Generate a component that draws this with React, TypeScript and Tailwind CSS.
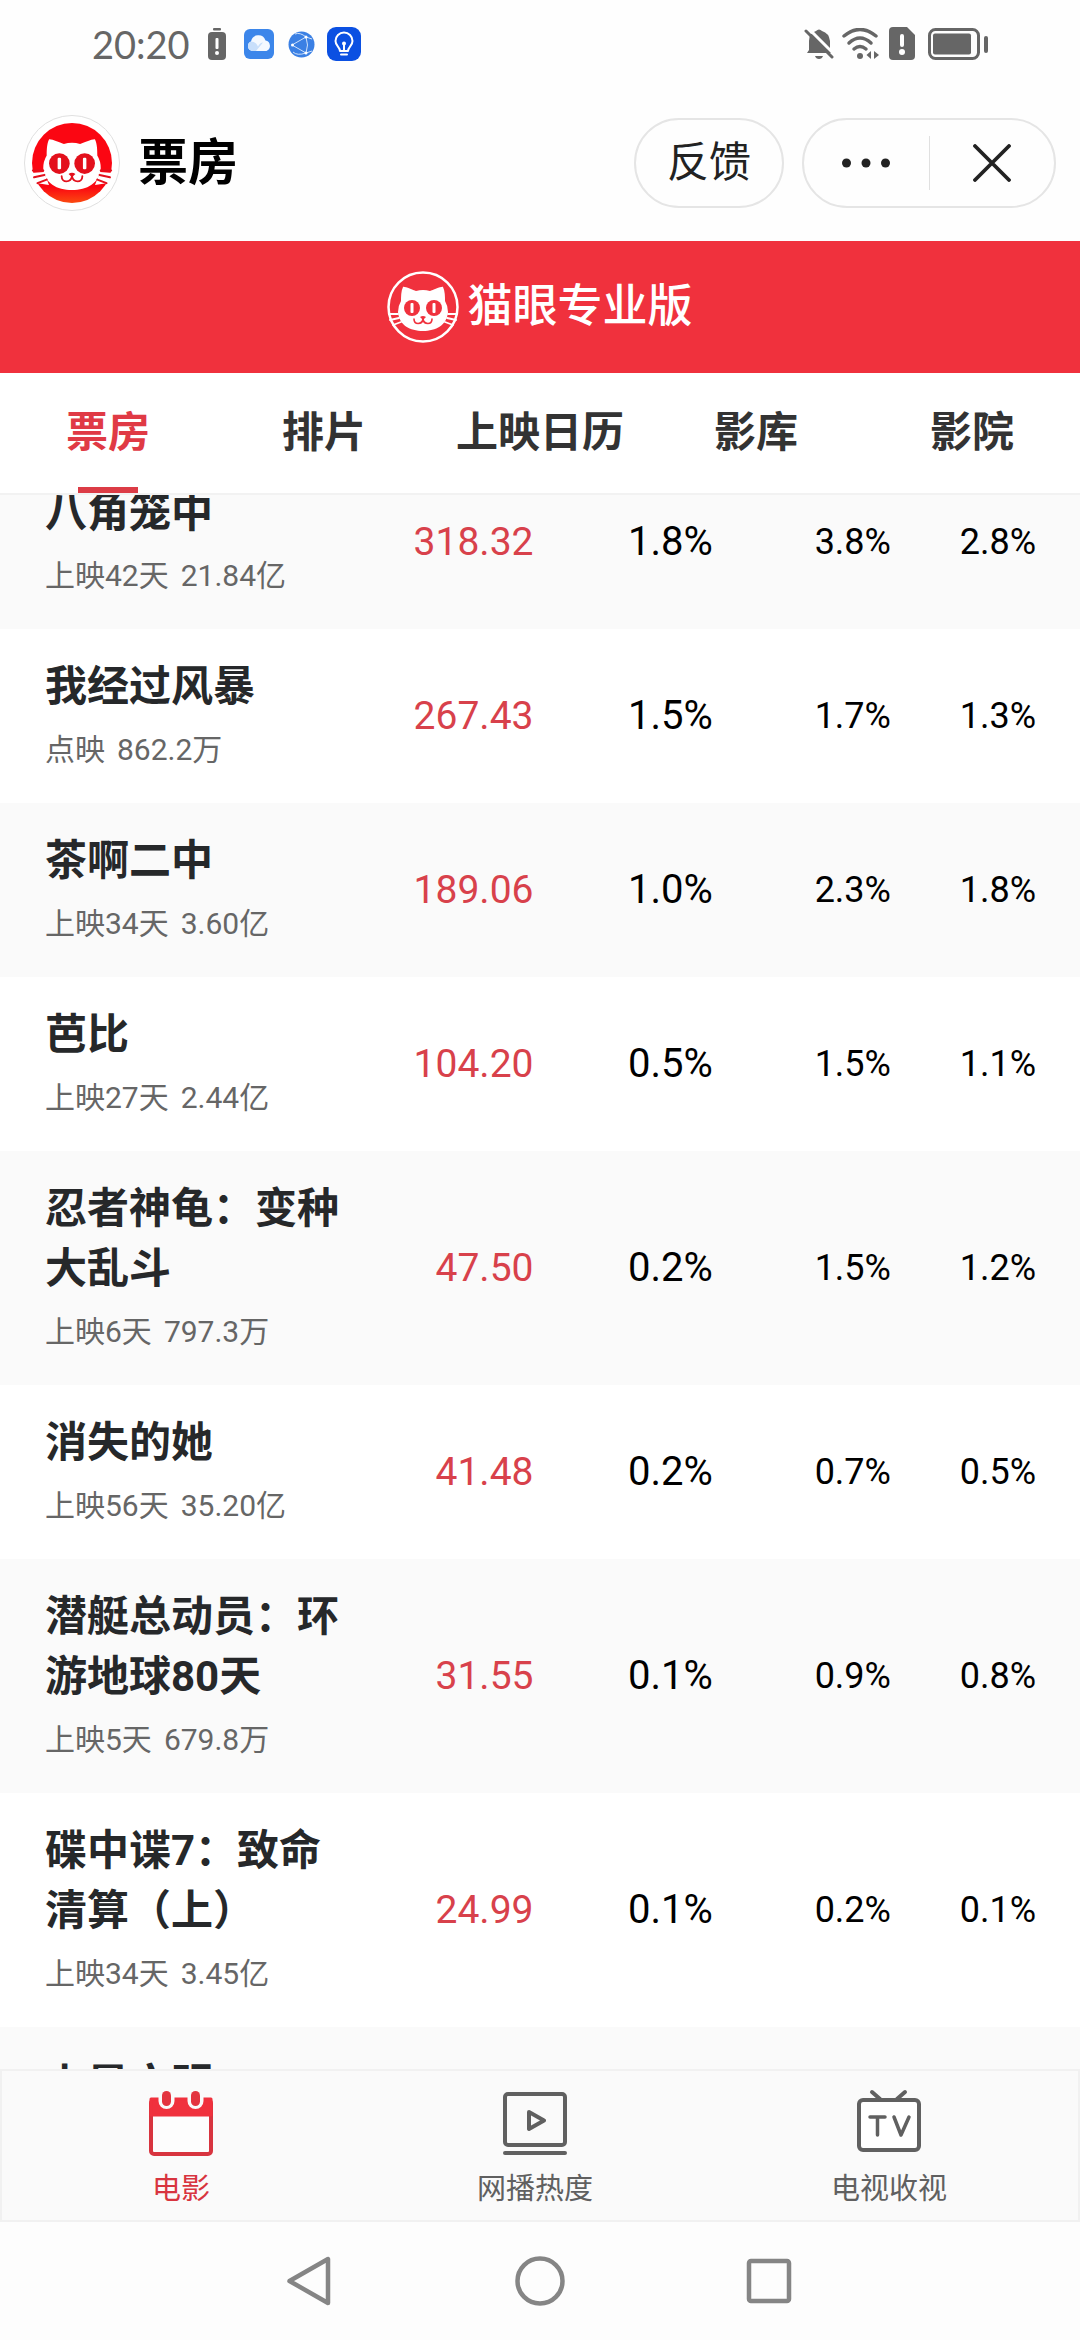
import type { ReactNode } from 'react';

type Film = { title: string; run: string; total: string; gross: string; share: string; shows: string; seats: string };

const films: Film[] = [
  { title: '八角笼中', run: '上映42天', total: '21.84亿', gross: '318.32', share: '1.8%', shows: '3.8%', seats: '2.8%' },
  { title: '我经过风暴', run: '点映', total: '862.2万', gross: '267.43', share: '1.5%', shows: '1.7%', seats: '1.3%' },
  { title: '茶啊二中', run: '上映34天', total: '3.60亿', gross: '189.06', share: '1.0%', shows: '2.3%', seats: '1.8%' },
  { title: '芭比', run: '上映27天', total: '2.44亿', gross: '104.20', share: '0.5%', shows: '1.5%', seats: '1.1%' },
  { title: '忍者神龟：变种大乱斗', run: '上映6天', total: '797.3万', gross: '47.50', share: '0.2%', shows: '1.5%', seats: '1.2%' },
  { title: '消失的她', run: '上映56天', total: '35.20亿', gross: '41.48', share: '0.2%', shows: '0.7%', seats: '0.5%' },
  { title: '潜艇总动员：环游地球80天', run: '上映5天', total: '679.8万', gross: '31.55', share: '0.1%', shows: '0.9%', seats: '0.8%' },
  { title: '碟中谍7：致命清算（上）', run: '上映34天', total: '3.45亿', gross: '24.99', share: '0.1%', shows: '0.2%', seats: '0.1%' },
  { title: '上是文明', run: '', total: '', gross: '', share: '', shows: '', seats: '' },
];

const tabs = ['票房', '排片', '上映日历', '影库', '影院'];

/* Cat face on a 72-unit square; `eye` is the colour behind the face. */
function CatFace({ eye, eyeRadius, whisker }: { eye: string; eyeRadius: number; whisker: string }) {
  return (
    <g>
      <path
        fill="#fff"
        d="M16 16 C17 15 26 19 29 20 Q36 18 43 20 C46 19 55 15 56 16 C58 20 58 26 58 30 Q61 35 61 41 C60 54 49 60 36 60 C23 60 12 54 11 41 Q11 35 14 30 C14 26 14 20 16 16 Z"
      />
      <g fill={eye}>
        <circle cx="25" cy="37" r={eyeRadius} />
        <circle cx="47" cy="37" r={eyeRadius} />
        <path d="M33 46 Q36 44 39 46 L36 49 Z" />
      </g>
      <g fill="none" strokeLinecap="round">
        <path stroke={eye} strokeWidth="1.600" d="M36 48 C35 54 27 54 27 48 M36 48 C37 54 45 54 45 48" />
        <path stroke={whisker} strokeWidth="1.800" d="M2 43 L11 43 M3 49 L12 47 M6 54 L14 51 M70 43 L61 43 M69 49 L60 47 M66 54 L58 51" />
      </g>
      <g fill="#fff">
        <rect x="23.500" y="32" width="3" height="10" rx="1" />
        <rect x="45.500" y="32" width="3" height="10" rx="1" />
      </g>
    </g>
  );
}

function StatusBar() {
  return (
    <div className="flex h-[88px] shrink-0 items-center justify-between pr-[92px] pl-[92px] text-[#666]">
      <div className="flex items-center">
        <span className="w-[98px] text-[38px] leading-[48px] whitespace-nowrap" style={{ fontFamily: 'Lato, sans-serif' }}>
          20:20
        </span>
        <svg className="ml-[17px] h-8 w-5" viewBox="0 0 20 32" fill="currentColor">
          <rect x="6" y="0" width="8" height="2.5" rx="1" />
          <rect x="1" y="4" width="18" height="28" rx="4" />
          <rect x="8.5" y="10" width="3" height="11" rx="1" fill="#fff" />
          <circle cx="10" cy="25" r="2" fill="#fff" />
        </svg>
        <svg className="ml-[17px] size-[30px]" viewBox="0 0 30 30">
          <rect width="30" height="30" rx="6" fill="#3c86ea" />
          <path d="M8 22 a5 5 0 0 1 -1 -9.500 a7.500 7.500 0 0 1 14.500 -1 a5.500 5.500 0 0 1 1 10.500 Z" fill="#f4f9ff" />
          <path d="M8 22 a5 5 0 0 1 -1 -9.500 q5 0 7 5 q2 -4 5 -4 l-7 8.500 Z" fill="#c8dffb" />
        </svg>
        <svg className="ml-[14px] size-[27px]" viewBox="0 0 27 27">
          <circle cx="13.500" cy="13.500" r="13" fill="#3b80e4" />
          <g fill="none" stroke="#cfe1fa" strokeWidth="1">
            <path d="M4 14 L18 6 M4 14 L18 22 M18 6 Q21 14 18 22 M18 6 Q12 1 7 3 M18 6 L24 8 M18 22 Q9 25 5 21 M18 22 L24 20" />
          </g>
          <g fill="#fff">
            <circle cx="4.500" cy="14" r="1.500" />
            <circle cx="18" cy="6" r="1.500" />
            <circle cx="18" cy="22" r="1.500" />
          </g>
        </svg>
        <svg className="ml-3 size-[34px]" viewBox="0 0 34 34">
          <rect width="34" height="34" rx="9" fill="#0b50e2" />
          <g fill="none" stroke="#fff" strokeWidth="2" strokeLinecap="round" strokeLinejoin="round">
            <path d="M13 24 C13 20 8.500 19 8.500 14 A8.500 8.500 0 0 1 25.500 14 C25.500 19 21 20 21 24 Z" />
            <path d="M14 27.500 H20 M17 24 V17" />
          </g>
          <circle cx="17" cy="16.500" r="2" fill="#fff" />
        </svg>
      </div>
      <div className="flex items-center">
        <svg className="h-8 w-[30px]" viewBox="0 0 30 32" fill="currentColor">
          <path d="M3 25 L5 22 V13 Q5 5 12 3 Q15 0 18 3 Q25 5 26 13 V22 L28 25 Z" />
          <path d="M11 28 H19 Q18 31 15 31 Q12 31 11 28 Z" />
          <path d="M1 -3 L33 29" stroke="#fff" strokeWidth="3" />
          <path d="M2 3 L28 29" stroke="currentColor" strokeWidth="3" strokeLinecap="round" />
        </svg>
        <svg className="ml-2 h-8 w-[38px]" viewBox="0 0 38 32">
          <g fill="none" stroke="currentColor" strokeWidth="3.500" strokeLinecap="round">
            <path d="M2 8 Q18 -5 34 8" />
            <path d="M7 15 Q18 5 29 15" />
            <path d="M12 21 Q18 16 24 21" />
          </g>
          <circle cx="18" cy="28" r="3" fill="currentColor" />
          <path d="M29 23 V31 L24.500 27 Z M32 23 V31 L37 27 Z" fill="currentColor" />
        </svg>
        <svg className="ml-2 h-[34px] w-7" viewBox="0 0 28 34" fill="currentColor">
          <path d="M5 0 H19 L27 8 V29 Q27 33 23 33 H5 Q1 33 1 29 V4 Q1 0 5 0 Z" />
          <rect x="12" y="7" width="4" height="13" rx="2" fill="#fff" />
          <circle cx="14" cy="25" r="3" fill="#fff" />
        </svg>
        <svg className="ml-3 h-8 w-[60px]" viewBox="0 0 60 32">
          <rect x="1.500" y="1.500" width="49" height="29" rx="6" fill="none" stroke="currentColor" strokeWidth="3" />
          <rect x="5" y="5.500" width="38" height="21" rx="2" fill="currentColor" />
          <rect x="56" y="8" width="4" height="17" rx="2" fill="currentColor" />
        </svg>
      </div>
    </div>
  );
}

function AppHeader() {
  return (
    <header className="flex h-[153px] shrink-0 items-center pr-6 pb-1 pl-6">
      <svg className="size-24" viewBox="0 0 96 96">
        <defs>
          <linearGradient id="badge" x1="0" y1="0" x2="0" y2="1">
            <stop offset="0.800" stopColor="#fb0612" />
            <stop offset="1" stopColor="#fb4a10" />
          </linearGradient>
        </defs>
        <circle cx="48" cy="48" r="47.500" fill="#fff" stroke="#e0e0e0" />
        <circle cx="48" cy="48" r="40" fill="url(#badge)" />
        <path d="M7 58 L20 57 L25 70 L12 68 Z M89 58 L76 57 L71 70 L84 68 Z" fill="#fff" />
        <g transform="translate(6.600 6) scale(1.150)">
          <CatFace eye="#e3101c" eyeRadius={9} whisker="#e3101c" />
        </g>
      </svg>
      <h1 className="ml-[18px] text-[50px] leading-[60px] font-bold text-black">票房</h1>
      <button type="button" className="ml-auto h-[90px] w-[150px] rounded-full border-2 border-[#e5e5e5] text-[42px] text-[#222]">
        反馈
      </button>
      <div className="ml-[18px] flex h-[90px] w-[254px] items-center rounded-full border-2 border-[#e5e5e5] text-[#222]">
        <button type="button" aria-label="更多" className="flex flex-1 justify-center">
          <svg className="h-3 w-12" viewBox="0 0 48 12" fill="currentColor">
            <circle cx="4.500" cy="6" r="4.500" />
            <circle cx="24" cy="6" r="4.500" />
            <circle cx="43.500" cy="6" r="4.500" />
          </svg>
        </button>
        <span className="h-[54px] w-px bg-[#e0e0e0]" />
        <button type="button" aria-label="关闭" className="flex flex-1 justify-center">
          <svg className="size-[38px]" viewBox="0 0 38 38" fill="none" stroke="currentColor" strokeWidth="3.800" strokeLinecap="round">
            <path d="M2 2 L36 36 M36 2 L2 36" />
          </svg>
        </button>
      </div>
    </header>
  );
}

function Banner() {
  return (
    <div className="flex h-[132px] shrink-0 items-center justify-center bg-[#f0313d]">
      <svg className="size-[72px]" viewBox="0 0 72 72">
        <circle cx="36" cy="36" r="34.500" fill="none" stroke="#fff" strokeWidth="2.500" />
        <CatFace eye="#f0313d" eyeRadius={8} whisker="#fff" />
      </svg>
      <span className="ml-2 text-[45px] leading-[60px] font-medium text-white">猫眼专业版</span>
    </div>
  );
}

function Tabs() {
  return (
    <nav className="grid h-[122px] shrink-0 grid-cols-5 border-b-2 border-[#f2f2f2] bg-white">
      {tabs.map((t, i) => (
        <button
          key={t}
          type="button"
          className={
            'relative flex items-center justify-center text-[42px] leading-[60px] font-bold whitespace-nowrap ' +
            (i === 0 ? 'text-[#e03a45]' : 'text-[#333]')
          }
        >
          {t}
          {i === 0 && <span className="absolute bottom-0 left-1/2 h-1.5 w-[60px] -translate-x-1/2 bg-[#dc3c46]" />}
        </button>
      ))}
    </nav>
  );
}

function FilmTable() {
  return (
    <main className="min-h-0 flex-1 overflow-hidden bg-white">
      <table className="-mt-10 w-full table-fixed text-right">
        <colgroup>
          <col className="w-[32%]" />
          <col className="w-[17.400%]" />
          <col className="w-[16.600%]" />
          <col className="w-[16.500%]" />
          <col />
        </colgroup>
        <tbody>
          {films.map((f) => (
            <tr key={f.title} className="odd:bg-[#fafafa]">
              <th scope="row" className="pt-7 pb-8 pl-[45px] text-left align-top font-normal">
                <div className="text-[42px] leading-[60px] font-bold text-[#26282a]">{f.title}</div>
                <div className="mt-3 flex h-[42px] gap-3 text-[30px] leading-[42px] whitespace-nowrap text-[#666]">
                  <span>{f.run}</span>
                  <span>{f.total}</span>
                </div>
              </th>
              <td className="text-[39px] text-[#d8414b]">{f.gross}</td>
              <td className="text-[40px] text-black">{f.share}</td>
              <td className="text-[36px] text-black">{f.shows}</td>
              <td className="pr-11 text-[36px] text-black">{f.seats}</td>
            </tr>
          ))}
        </tbody>
      </table>
    </main>
  );
}

function FooterItem({ label, active, children }: { label: string; active?: boolean; children: ReactNode }) {
  return (
    <button type="button" className={'flex flex-1 flex-col items-center pt-[18px] ' + (active ? 'text-[#d8343f]' : 'text-[#606060]')}>
      <svg className="size-[72px]" viewBox="0 0 72 72" fill="none" stroke="currentColor" strokeWidth="4" strokeLinecap="round" strokeLinejoin="round">
        {children}
      </svg>
      <span className="mt-2 text-[29px] leading-10">{label}</span>
    </button>
  );
}

function Footer() {
  return (
    <footer className="flex h-[153px] shrink-0 border-2 border-[#f1f1f1] bg-[#fafafa] pr-3 pl-0.5">
      <FooterItem label="电影" active>
        <rect x="6" y="11" width="60" height="54" rx="3" fill="#fdfdfd" />
        <path d="M6 10 H66 V26 H6 Z" fill="#f0313d" stroke="#f0313d" strokeWidth="3" />
        <rect x="13.500" y="-1" width="16" height="21" rx="8" fill="#fafafa" stroke="none" />
        <rect x="42.500" y="-1" width="16" height="21" rx="8" fill="#fafafa" stroke="none" />
        <rect x="17" y="2" width="9" height="15" rx="4.500" fill="#e3343f" stroke="none" />
        <rect x="46" y="2" width="9" height="15" rx="4.500" fill="#e3343f" stroke="none" />
      </FooterItem>
      <FooterItem label="网播热度">
        <rect x="6" y="5" width="60" height="51" rx="3" />
        <path d="M6 64 H66 M30 23 L45 31.500 L30 40 Z" />
      </FooterItem>
      <FooterItem label="电视收视">
        <rect x="6" y="11" width="60" height="50" rx="4" fill="#fff" />
        <path d="M19 3 L27 10 M52 3 L44 10" />
        <path d="M17 28 H32 M24.500 28 V46 M41 28 L48 46 L56 28" strokeWidth="3.500" />
      </FooterItem>
    </footer>
  );
}

function SystemNav() {
  return (
    <nav className="flex h-[118px] shrink-0 items-center justify-center gap-[177px] bg-[#fdfdfd] text-[#858585]">
      <button type="button" aria-label="返回">
        <svg className="size-[52px]" viewBox="0 0 52 52" fill="none" stroke="currentColor" strokeWidth="4.500" strokeLinejoin="round">
          <path d="M43 4 V48 L4.500 26 Z" />
        </svg>
      </button>
      <button type="button" aria-label="主页">
        <svg className="size-[52px]" viewBox="0 0 52 52" fill="none" stroke="currentColor" strokeWidth="4.500">
          <circle cx="26" cy="26" r="22.500" />
        </svg>
      </button>
      <button type="button" aria-label="最近任务">
        <svg className="size-[52px]" viewBox="0 0 52 52" fill="none" stroke="currentColor" strokeWidth="4.500">
          <rect x="6" y="6" width="40" height="40" rx="2" />
        </svg>
      </button>
    </nav>
  );
}

export default function App() {
  return (
    <div className="flex h-screen flex-col bg-[#fefefe]" style={{ fontFamily: 'Roboto, "Noto Sans CJK SC", sans-serif' }}>
      <StatusBar />
      <AppHeader />
      <Banner />
      <Tabs />
      <FilmTable />
      <Footer />
      <SystemNav />
    </div>
  );
}
